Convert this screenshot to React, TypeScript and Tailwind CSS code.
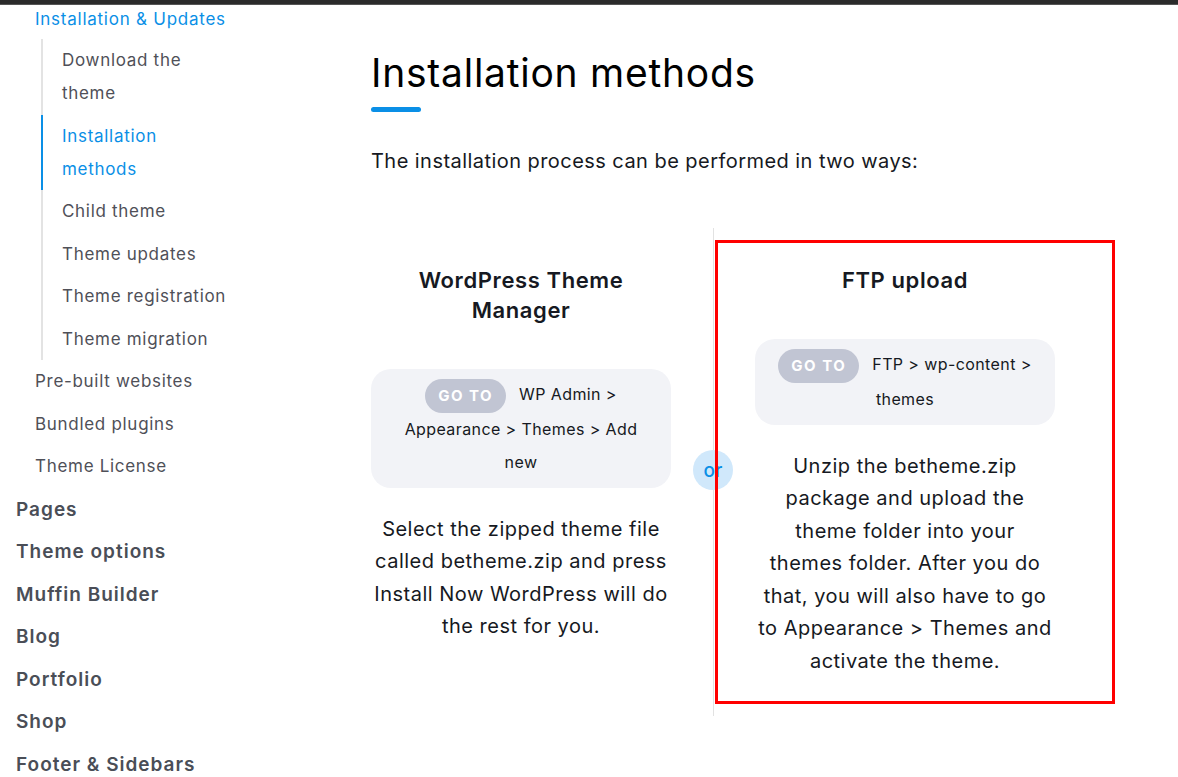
import React from "react";

const font = { fontFamily: "Inter, 'Noto Sans', sans-serif" };

function SubItem({ children, active }: { children: React.ReactNode; active?: boolean }) {
  return (
    <li
      className={`-ml-[2px] border-l-2 pl-[19px] py-[4.75px] text-[17px] tracking-[0.7px] leading-[33px] ${
        active ? "border-[#0a8fe6] text-[#0a8fe6]" : "border-transparent text-[#4f5058]"
      }`}
    >
      {children}
    </li>
  );
}

function L1({ children }: { children: React.ReactNode }) {
  return (
    <li className="pl-[35px] py-[4.75px] text-[17px] tracking-[0.7px] leading-[33px] text-[#4f5058]">{children}</li>
  );
}

function L0({ children }: { children: React.ReactNode }) {
  return (
    <li className="pl-[16px] py-[4.75px] text-[19px] tracking-[1px] leading-[33px] font-semibold text-[#4a4e57]">
      {children}
    </li>
  );
}

function Pill() {
  return (
    <span className="inline-block align-middle rounded-full bg-[#c1c5d3] px-[13px] h-[34px] leading-[34px] text-[15px] font-bold tracking-[1.5px] text-white mr-[13px]">
      GO TO
    </span>
  );
}

export default function App() {
  return (
    <div className="w-[1178px] h-[777px] overflow-hidden bg-white" style={font}>
      <div className="h-[5px] bg-[#2b2b2b] border-b border-[#555]" />
      <div className="flex">
        <aside className="w-[371px] shrink-0">
          <ul>
            <li className="pl-[35px] pt-[0.5px] pb-[7.75px] text-[17px] tracking-[0.75px] leading-[26px] text-[#0a8fe6]">
              Installation &amp; Updates
            </li>
            <li>
              <ul className="ml-[41px] border-l-2 border-[#e3e3e3]">
                <SubItem>
                  Download the
                  <br />
                  theme
                </SubItem>
                <SubItem active>
                  Installation
                  <br />
                  methods
                </SubItem>
                <SubItem>Child theme</SubItem>
                <SubItem>Theme updates</SubItem>
                <SubItem>Theme registration</SubItem>
                <SubItem>Theme migration</SubItem>
              </ul>
            </li>
            <L1>Pre-built websites</L1>
            <L1>Bundled plugins</L1>
            <L1>Theme License</L1>
            <L0>Pages</L0>
            <L0>Theme options</L0>
            <L0>Muffin Builder</L0>
            <L0>Blog</L0>
            <L0>Portfolio</L0>
            <L0>Shop</L0>
            <L0>Footer &amp; Sidebars</L0>
          </ul>
        </aside>

        <main className="flex-1 text-[#161922]">
          <h1 className="mt-[44px] text-[39px] tracking-[0.75px] leading-[48px] font-normal text-black">
            Installation methods
          </h1>
          <div className="mt-[10px] w-[50px] h-[5px] rounded-full bg-[#0a8fe6]" />
          <p className="mt-[33px] text-[20px] tracking-[0.45px] leading-[32px]">
            The installation process can be performed in two ways:
          </p>

          <div className="mt-[51px] flex items-stretch">
            <div className="w-[342px] shrink-0 pt-[37px]">
              <div className="w-[300px] text-center">
                <h3 className="text-[22px] tracking-[0.6px] leading-[30px] font-semibold text-[#161922]">
                  WordPress Theme
                  <br />
                  Manager
                </h3>
                <div className="mt-[44px] rounded-[20px] bg-[#f2f3f7] py-[9px] text-[16px] tracking-[0.4px] leading-[33px]">
                  <Pill />
                  WP Admin &gt;
                  <br />
                  Appearance &gt; Themes &gt; Add
                  <br />
                  new
                </div>
                <p className="mt-[25px] text-[20px] tracking-[0.5px] leading-[32.5px]">
                  Select the zipped theme file
                  <br />
                  called betheme.zip and press
                  <br />
                  Install Now WordPress will do
                  <br />
                  the rest for you.
                </p>
              </div>
            </div>

            <div className="relative w-px shrink-0 bg-[#e2e2e2]">
              <div className="absolute left-[-20px] top-[222px] w-[40px] h-[40px] rounded-full bg-[#d0e8fb] flex items-center justify-center text-[19px] font-medium text-[#0a8fe6] leading-none">
                or
              </div>
            </div>

            <div className="relative z-10 ml-[1px] my-[12px] w-[400px] border-[3px] border-[#ff0000] pl-[37px] pr-[57px] pt-[22px] pb-[24px]">
              <div className="w-[300px] text-center">
                <h3 className="text-[22px] tracking-[0.6px] leading-[30px] font-semibold text-[#161922]">FTP upload</h3>
                <div className="mt-[44px] rounded-[20px] bg-[#f2f3f7] py-[9px] text-[16px] tracking-[0.4px] leading-[33px]">
                  <Pill />
                  FTP &gt; wp-content &gt;
                  <br />
                  themes
                </div>
                <p className="mt-[25px] text-[20px] tracking-[0.5px] leading-[32.5px]">
                  Unzip the betheme.zip
                  <br />
                  package and upload the
                  <br />
                  theme folder into your
                  <br />
                  themes folder. After you do
                  <br />
                  that, you will also have to go
                  <br />
                  to Appearance &gt; Themes and
                  <br />
                  activate the theme.
                </p>
              </div>
            </div>
          </div>
        </main>
      </div>
    </div>
  );
}
